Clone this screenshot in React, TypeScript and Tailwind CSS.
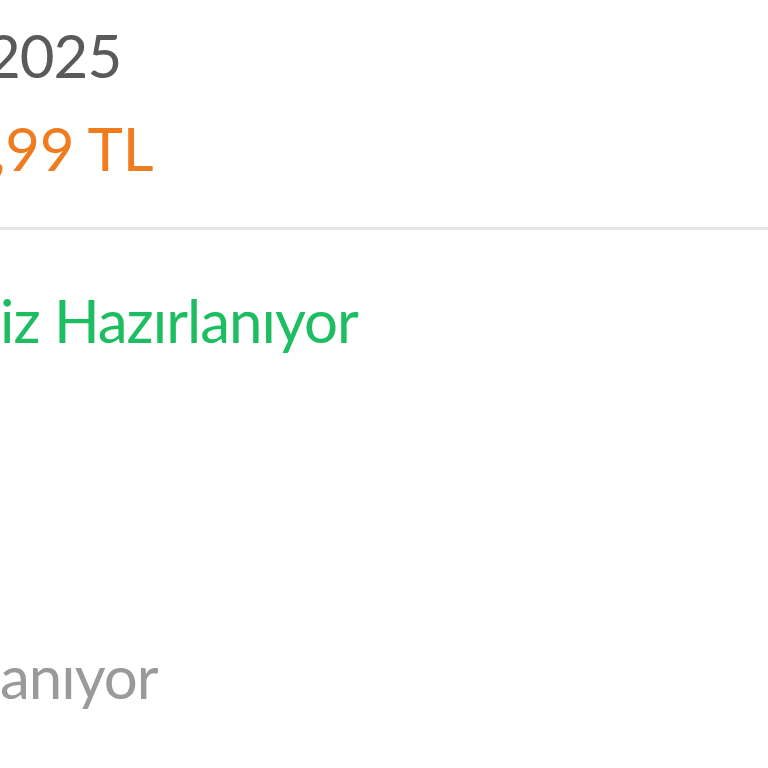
const rows = {
  date: { hidden: "Sipariş Tarihi: 12.05.", shown: "2025", shift: "-ml-[14px]" },
  price: { hidden: "Toplam: 1.249", shown: ",99 TL", shift: "-ml-[8px]" },
  status: { hidden: "Siparişin", shown: "iz Hazırlanıyor", shift: "" },
  next: { hidden: "Kargol", shown: "anıyor", shift: "" },
};

// the page is cut at the left edge; the hidden part of each line spills off-screen
function Clipped({
  hidden,
  shown,
  shift,
  className,
}: {
  hidden: string;
  shown: string;
  shift: string;
  className: string;
}) {
  return (
    <div className={`flex whitespace-nowrap ${className}`}>
      <div className={`w-0 flex justify-end ${shift}`}>{hidden}</div>
      <div>{shown}</div>
    </div>
  );
}

export default function App() {
  return (
    <div
      className="w-[768px] h-[768px] overflow-hidden bg-white tracking-[-1px]"
      style={{ fontFamily: "Lato, 'Noto Sans', sans-serif" }}
    >
      <div className="pt-[25px] text-[60px] leading-[60px]">
        <Clipped {...rows.date} className="text-[#5a5a5a]" />
        <Clipped {...rows.price} className="mt-[33px] text-[#ef7d1f] tracking-[-0.3px]" />
      </div>
      <div className="mt-[49px] h-[3px] bg-[#e6e6e6]" />
      <div className="text-[60px] leading-[60px]">
        <Clipped {...rows.status} className="mt-[60px] text-[#1dbd62]" />
        <Clipped {...rows.next} className="mt-[296px] text-[#9a9a9a]" />
      </div>
    </div>
  );
}
